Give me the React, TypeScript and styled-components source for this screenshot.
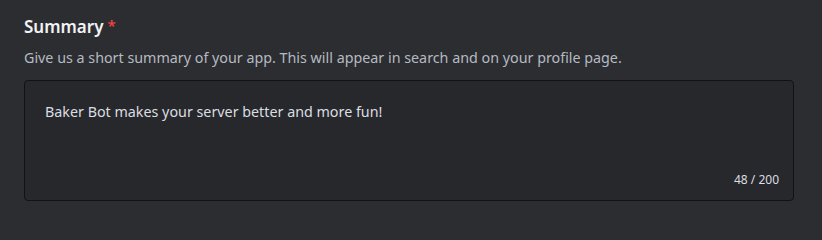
import React from "react";
import styled, { createGlobalStyle } from "styled-components";

const Global = createGlobalStyle`
  html, body { margin: 0; padding: 0; background: #2c2d31; }
  body { font-family: "Noto Sans", "Open Sans", sans-serif; -webkit-font-smoothing: antialiased; }
`;

const Page = styled.div`
  width: 822px;
  height: 232px;
  box-sizing: border-box;
  padding: 16px 28px 0 24px;
  background: #2c2d31;
`;

const Title = styled.h2`
  margin: 0;
  font-size: 17px;
  line-height: 22px;
  font-weight: 600;
  color: #f2f3f5;
  display: flex;
  align-items: flex-start;
  gap: 4px;
`;

const Required = styled.span`
  color: #f23f42;
  font-size: 15px;
  line-height: 18px;
`;

const Description = styled.p`
  margin: 10px 0 0;
  font-size: 14.3px;
  line-height: 20px;
  color: #b5bac1;
`;

const Field = styled.div`
  margin-top: 12px;
  position: relative;
  height: 121px;
  box-sizing: border-box;
  border: 1px solid #111214;
  border-radius: 4px;
  background: #27282c;
  padding: 21px 20px;
`;

const Value = styled.div`
  font-size: 14.3px;
  line-height: 20px;
  color: #dbdee1;
`;

const Counter = styled.span`
  position: absolute;
  right: 14px;
  bottom: 12px;
  font-size: 12px;
  line-height: 16px;
  color: #dbdee1;
`;

export default function App() {
  return (
    <>
      <Global />
      <Page>
        <Title>
          Summary<Required>*</Required>
        </Title>
        <Description>
          Give us a short summary of your app. This will appear in search and on your profile page.
        </Description>
        <Field>
          <Value>Baker Bot makes your server better and more fun!</Value>
          <Counter>48 / 200</Counter>
        </Field>
      </Page>
    </>
  );
}
